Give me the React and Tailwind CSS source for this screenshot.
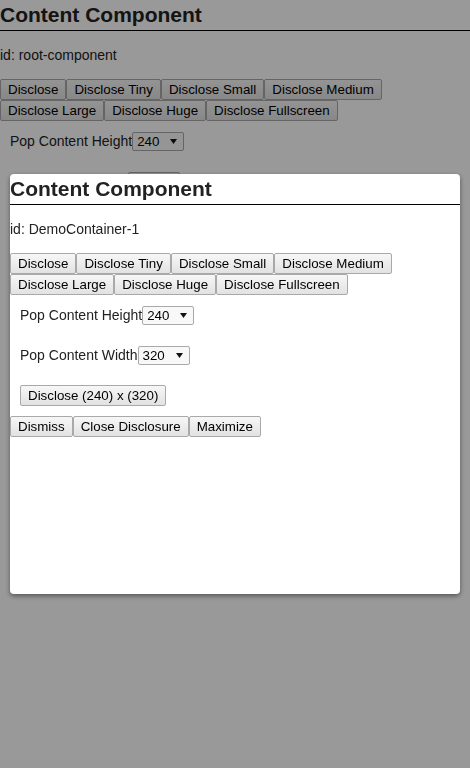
import React from "react";

const btn =
  "border border-[#a9a9a9] rounded-[2px] bg-linear-to-b from-[#f7f7f7] to-[#e2e2e2] px-[7px] py-[2px] text-[13.33px] leading-[15px] text-black whitespace-nowrap";

function Select({ value }) {
  return (
    <span className="relative inline-flex">
      <select
        defaultValue={value}
        className="appearance-none w-[52px] h-[19px] pl-[4px] border border-[#a9a9a9] rounded-[2px] bg-[#f8f8f8] text-[13.33px] leading-[15px] text-black"
      >
        <option value="240">240</option>
        <option value="320">320</option>
        <option value="480">480</option>
      </select>
      <svg
        className="absolute right-[7px] top-[7px] pointer-events-none"
        width="7"
        height="5"
        viewBox="0 0 7 5"
      >
        <path d="M0 0H7L3.5 5Z" fill="#111" />
      </svg>
    </span>
  );
}

function Title() {
  return (
    <div className="border-b border-black pt-[3px] pb-[3px] text-[21px] leading-[24px] font-bold text-[#222] whitespace-nowrap">
      Content Component
    </div>
  );
}

function Buttons() {
  const names = [
    "Disclose",
    "Disclose Tiny",
    "Disclose Small",
    "Disclose Medium",
    "Disclose Large",
    "Disclose Huge",
    "Disclose Fullscreen",
  ];
  return (
    <div className="flex flex-wrap">
      {names.map((n) => (
        <button key={n} className={btn}>
          {n}
        </button>
      ))}
    </div>
  );
}

function Content({ id, width, dismiss }) {
  return (
    <div className="text-[#222]">
      <Title />
      <div className="my-[16px] text-[14px] leading-[16px]">id: {id}</div>
      <Buttons />
      <div className="flex flex-col gap-[20px] p-[10px] items-start">
        <div className="flex items-center h-[20px] text-[14px]">
          <span>Pop Content Height</span>
          <Select value="240" />
        </div>
        <div className="flex items-center h-[20px] text-[14px]">
          <span>Pop Content Width</span>
          <Select value={width} />
        </div>
        <button className={btn}>Disclose (240) x (320)</button>
      </div>
      {dismiss && (
        <div className="flex">
          <button className={btn}>Dismiss</button>
          <button className={btn}>Close Disclosure</button>
          <button className={btn}>Maximize</button>
        </div>
      )}
    </div>
  );
}

export default function App() {
  return (
    <div
      className="min-h-[768px] bg-white"
      style={{ fontFamily: '"Liberation Sans", Arial, sans-serif' }}
    >
      <Content id="root-component" width="320" />
      <div className="fixed inset-0 bg-black/40" />
      <div className="fixed left-[10px] top-[174px] w-[450px] h-[420px] bg-white rounded-[4px] shadow-[0_2px_5px_rgba(0,0,0,0.45)] overflow-hidden">
        <Content id="DemoContainer-1" width="320" dismiss />
      </div>
    </div>
  );
}
